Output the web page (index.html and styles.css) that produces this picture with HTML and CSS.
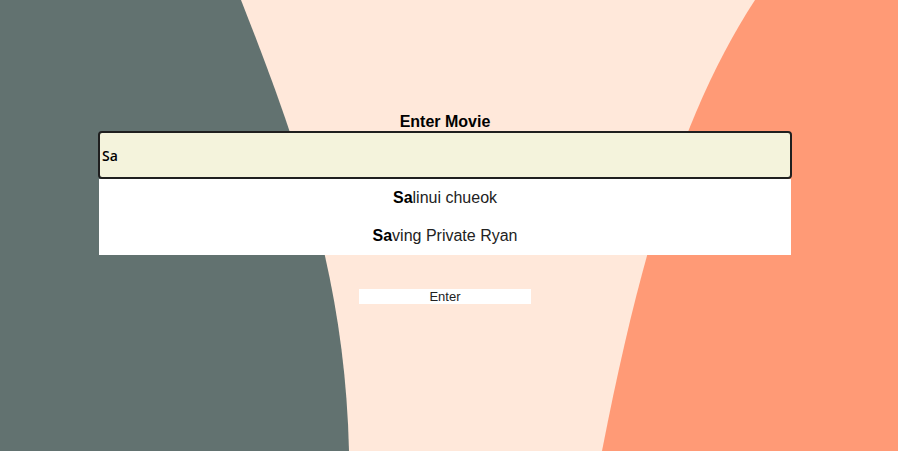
FILE: index.html
```html
<!DOCTYPE html>
<html>
<head>
<meta charset="utf-8">
<link rel="stylesheet" href="styles.css">
</head>
<body>
<svg class="bg" width="898" height="451" viewBox="0 0 898 451" preserveAspectRatio="none">
  <path d="M0,0 L241,0 C300,150 345,280 349,451 L0,451 Z" fill="#627270"/>
  <path d="M755,0 C690,100 645,230 602,451 L898,451 L898,0 Z" fill="#ff9a76"/>
</svg>
<main class="page">
  <div class="form">
    <label class="title" for="movie">Enter Movie</label>
    <div class="search">
      <input id="movie" class="field" type="text" value="Sa" autofocus>
      <ul class="suggest">
        <li class="item"><b>Sa</b>linui chueok</li>
        <li class="item"><b>Sa</b>ving Private Ryan</li>
      </ul>
    </div>
    <button class="btn" type="button">Enter</button>
  </div>
</main>
</body>
</html>
```
FILE: styles.css
```css
html, body {
  margin: 0;
  padding: 0;
}
body {
  width: 898px;
  height: 451px;
  overflow: hidden;
  background: #ffe8da;
  font-family: "Liberation Sans", Arial, sans-serif;
  position: relative;
}
.bg {
  position: absolute;
  left: 0;
  top: 0;
  z-index: 0;
}
.page {
  position: relative;
  z-index: 1;
  display: flex;
  justify-content: flex-start;
  padding-top: 113px;
  padding-left: 98px;
}
.form {
  width: 694px;
  display: flex;
  flex-direction: column;
  align-items: center;
}
.title {
  font-weight: bold;
  font-size: 16px;
  line-height: 18px;
  color: #000;
}
.search {
  width: 694px;
  display: flex;
  flex-direction: column;
}
.field {
  box-sizing: border-box;
  width: 694px;
  height: 48px;
  margin: 0;
  padding: 0 2px;
  border: 2px solid #1f1f1f;
  border-radius: 4px;
  background: #f4f3dc;
  font-family: "Open Sans", sans-serif;
  font-size: 14px;
  font-weight: 600;
  color: #000;
  caret-color: #000;
  outline: none;
}
.suggest {
  list-style: none;
  margin: 0 1px;
  padding: 0;
  background: #fff;
}
.item {
  height: 38px;
  line-height: 38px;
  text-align: center;
  font-size: 16px;
  color: #222;
}
.item b {
  color: #000;
}
.btn {
  margin-top: 34px;
  width: 172px;
  height: 15px;
  padding: 0;
  border: none;
  background: #fff;
  font-family: "Liberation Sans", Arial, sans-serif;
  font-size: 13px;
  line-height: 15px;
  color: #222;
}
```
